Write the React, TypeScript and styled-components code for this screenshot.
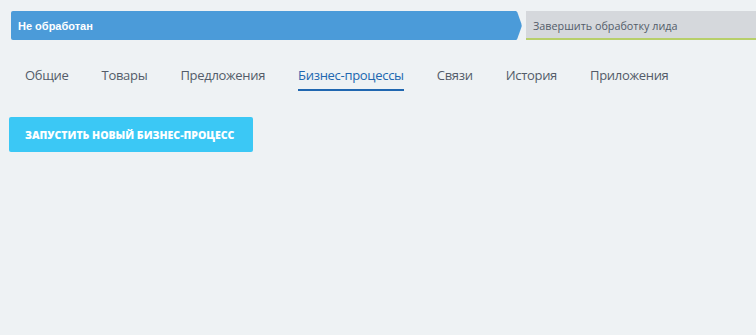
import React from "react";
import styled, { createGlobalStyle } from "styled-components";

const Global = createGlobalStyle`
  html, body { margin: 0; padding: 0; background: #eef2f4; }
  body { font-family: "Open Sans", "Liberation Sans", sans-serif; }
  * { box-sizing: border-box; }
`;

const Page = styled.div`
  width: 756px;
  height: 335px;
  overflow: hidden;
  background: #eef2f4;
  padding-top: 11px;
`;

const StatusRow = styled.div`
  display: flex;
  align-items: stretch;
  height: 29px;
  padding-left: 11px;
  gap: 4px;
`;

const StatusCurrent = styled.div`
  position: relative;
  flex: 0 0 504px;
  display: flex;
  align-items: center;
  padding-left: 7px;
  background: #4b9bd9;
  color: #fff;
  font-family: "Liberation Sans", Arial, sans-serif;
  font-weight: 700;
  font-size: 11px;
  border-radius: 2px 0 0 2px;
  margin-right: 7px;
`;

const Arrow = styled.svg`
  position: absolute;
  right: -7px;
  top: 0;
  width: 7px;
  height: 29px;
`;

const StatusFinish = styled.div`
  flex: 1;
  display: flex;
  align-items: center;
  padding-left: 7px;
  background: #d5d8dc;
  border-bottom: 2px solid #b7cf6a;
  color: #535c69;
  font-size: 10.8px;
  padding-top: 1px;
`;

const Tabs = styled.nav`
  display: flex;
  gap: 33px;
  padding-left: 25px;
  margin-top: 26px;
`;

const Tab = styled.div<{ $active?: boolean }>`
  font-size: 13px;
  letter-spacing: -0.3px;
  line-height: 19px;
  color: ${(p) => (p.$active ? "#2067b0" : "#535c69")};
  padding-bottom: 4px;
  border-bottom: 2px solid ${(p) => (p.$active ? "#2067b0" : "transparent")};
`;

const Actions = styled.div`
  display: flex;
  padding-left: 9px;
  margin-top: 26px;
`;

const RunButton = styled.button`
  height: 35px;
  width: 244px;
  padding: 0 0 0 16px;
  text-align: left;
  border: none;
  border-radius: 2px;
  background: #3bc8f5;
  color: #fff;
  font-family: "Open Sans", "Liberation Sans", sans-serif;
  font-weight: 800;
  font-size: 10.5px;
  text-transform: uppercase;
`;

const tabs = [
  "Общие",
  "Товары",
  "Предложения",
  "Бизнес-процессы",
  "Связи",
  "История",
  "Приложения",
];

export default function App() {
  return (
    <Page>
      <Global />
      <StatusRow>
        <StatusCurrent>
          Не обработан
          <Arrow viewBox="0 0 7 29">
            <path d="M0 0 L0.8 0 Q1.8 0 2.4 1.5 L6.3 12.5 Q7 14.5 6.3 16.5 L2.4 27.5 Q1.8 29 0.8 29 L0 29 Z" fill="#4b9bd9" />
          </Arrow>
        </StatusCurrent>
        <StatusFinish>Завершить обработку лида</StatusFinish>
      </StatusRow>
      <Tabs>
        {tabs.map((t) => (
          <Tab key={t} $active={t === "Бизнес-процессы"}>
            {t}
          </Tab>
        ))}
      </Tabs>
      <Actions>
        <RunButton>Запустить новый бизнес-процесс</RunButton>
      </Actions>
    </Page>
  );
}
